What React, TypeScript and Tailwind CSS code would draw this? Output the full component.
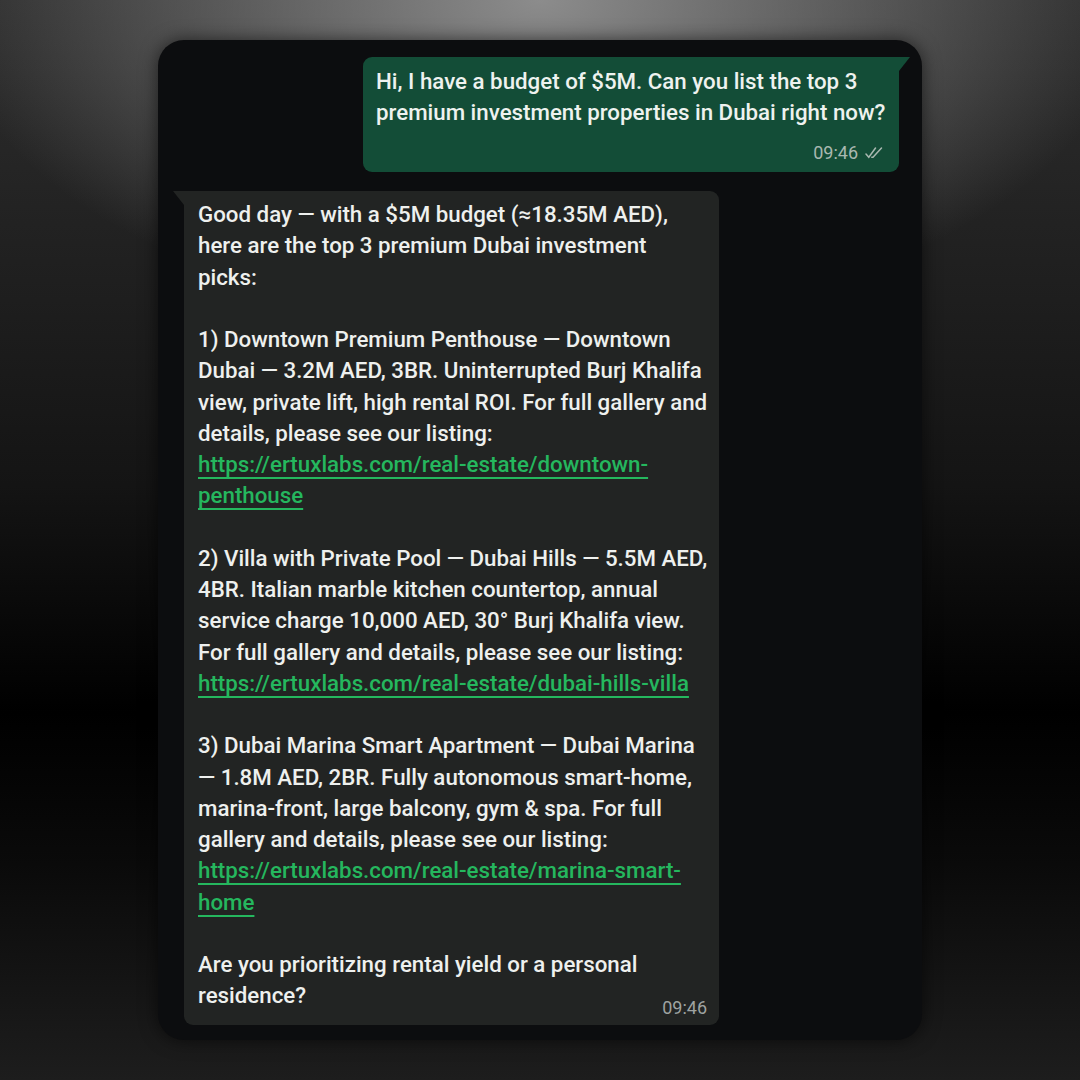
import React from "react";

type Seg = { t: string; link?: boolean };
type Line = Seg[] | null;

const T = (t: string): Seg[] => [{ t }];
const L = (t: string): Seg[] => [{ t, link: true }];

const reply: Line[] = [
  T("Good day — with a $5M budget (≈18.35M AED),"),
  T("here are the top 3 premium Dubai investment"),
  T("picks:"),
  null,
  T("1) Downtown Premium Penthouse — Downtown"),
  T("Dubai — 3.2M AED, 3BR. Uninterrupted Burj Khalifa"),
  T("view, private lift, high rental ROI. For full gallery and"),
  T("details, please see our listing:"),
  L("https://ertuxlabs.com/real-estate/downtown-"),
  L("penthouse"),
  null,
  T("2) Villa with Private Pool — Dubai Hills — 5.5M AED,"),
  T("4BR. Italian marble kitchen countertop, annual"),
  T("service charge 10,000 AED, 30° Burj Khalifa view."),
  T("For full gallery and details, please see our listing:"),
  L("https://ertuxlabs.com/real-estate/dubai-hills-villa"),
  null,
  T("3) Dubai Marina Smart Apartment — Dubai Marina"),
  T("— 1.8M AED, 2BR. Fully autonomous smart-home,"),
  T("marina-front, large balcony, gym & spa. For full"),
  T("gallery and details, please see our listing:"),
  L("https://ertuxlabs.com/real-estate/marina-smart-"),
  L("home"),
  null,
  T("Are you prioritizing rental yield or a personal"),
];

function DoubleCheck() {
  return (
    <svg width="20" height="13" viewBox="0 0 20 13" fill="none" className="ml-[7px]">
      <path d="M1 8 L3.8 11.2 L10.5 2" stroke="#a9b8b0" strokeWidth="1.5" strokeLinecap="round" />
      <path d="M6.8 11.2 L8 11.2 L16.5 2" stroke="#a9b8b0" strokeWidth="1.5" strokeLinecap="round" />
    </svg>
  );
}

function RenderLine({ line }: { line: Line }) {
  if (!line) return <div className="h-[31.25px]" />;
  return (
    <div className="whitespace-nowrap h-[31.25px]">
      {line.map((s, i) =>
        s.link ? (
          <a
            key={i}
            href="#"
            className="text-[#25b75e] underline decoration-[1.5px] underline-offset-[5px]"
          >
            {s.t}
          </a>
        ) : (
          <span key={i}>{s.t}</span>
        )
      )}
    </div>
  );
}

export default function App() {
  return (
    <div className="w-[1080px] h-[1080px] flex items-center justify-center bg-[radial-gradient(ellipse_55%_30%_at_50%_0%,#8c8c8c,rgba(60,60,60,0)),linear-gradient(#2e2e2e,#141414_45%,#000_66%,#0a0a0a_80%,#1d1d1d)] font-['Roboto',sans-serif]">
      <div className="w-[764px] h-[1000px] rounded-[26px] bg-[#0c0d0f] flex flex-col pt-[17px] px-[23px] pl-[26px] shadow-[0_0_18px_rgba(0,0,0,0.6)]">
        {/* outgoing message */}
        <div className="self-end relative w-[536px] bg-[#134d37] rounded-[9px] rounded-tr-none pl-[13px] pr-[14px] pt-[9px] pb-[6px] text-[#eef2ef] text-[22.3px] font-medium leading-[31.25px]">
          <div className="absolute -right-[11px] top-0 w-0 h-0 border-t-[14px] border-t-[#134d37] border-r-[11px] border-r-transparent" />
          <div className="whitespace-nowrap">Hi, I have a budget of $5M. Can you list the top 3</div>
          <div className="whitespace-nowrap">premium investment properties in Dubai right now?</div>
          <div className="flex items-center justify-end mt-[11px] h-[26px] text-[18px] font-normal text-[#a9b8b0]">
            <span>09:46</span>
            <DoubleCheck />
          </div>
        </div>

        {/* incoming reply */}
        <div className="self-start relative mt-[19px] w-[535px] bg-[#222423] rounded-[9px] rounded-tl-none pl-[14px] pr-[12px] pt-[8.5px] pb-[13px] text-[#eef0ee] text-[22.3px] font-medium leading-[31.25px]">
          <div className="absolute -left-[11px] top-0 w-0 h-0 border-t-[14px] border-t-[#222423] border-l-[11px] border-l-transparent" />
          {reply.map((line, i) => (
            <RenderLine key={i} line={line} />
          ))}
          <div className="flex items-end justify-between h-[31.25px]">
            <span className="whitespace-nowrap">residence?</span>
            <span className="text-[18px] font-normal leading-[20px] text-[#9fa3a1] mb-[-6px]">09:46</span>
          </div>
        </div>
      </div>
    </div>
  );
}
